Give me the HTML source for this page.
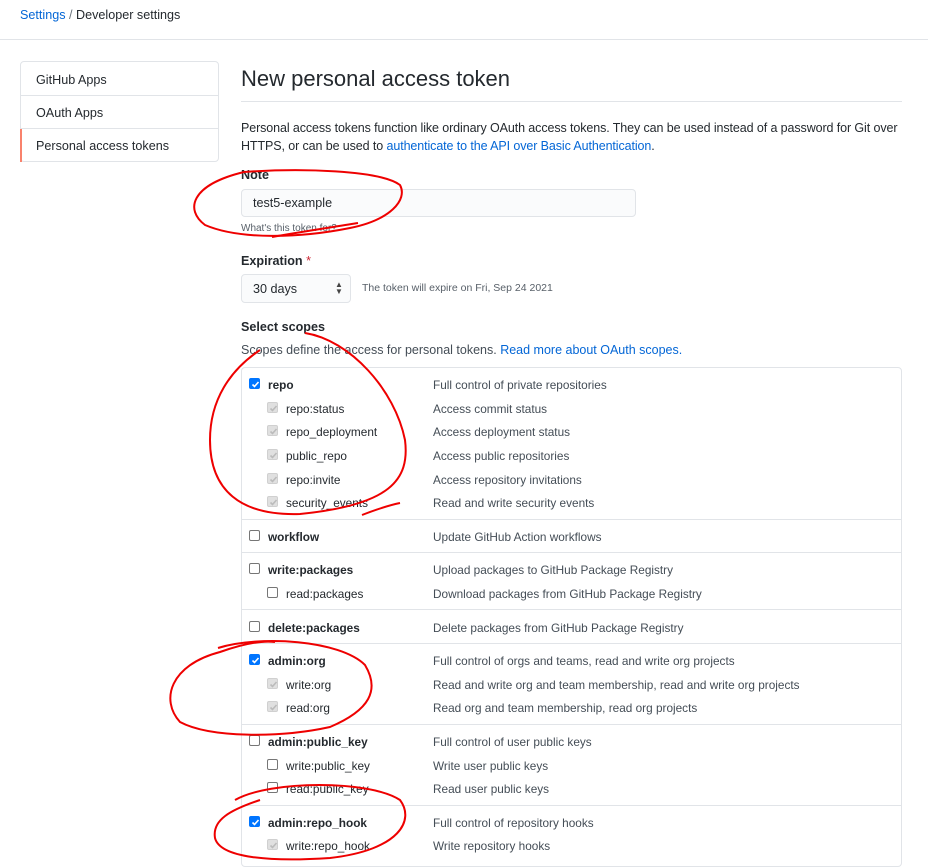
<!DOCTYPE html>
<html><head><meta charset="utf-8"><style>
body{margin:0;width:928px;height:862px;overflow:hidden;background:#fff;font-family:"Liberation Sans",sans-serif;color:#24292e;position:relative}
.a{position:absolute;white-space:nowrap}
.blue{color:#0366d6}
.cb{position:absolute;width:11px;height:11px;border:1px solid #767676;border-radius:2px;background:#fff;box-sizing:border-box}
.cb.on{background:#0075ff;border-color:#0075ff}
.cb.dis{background:#e0e0e0;border-color:#d0d0d0}
.cb svg{position:absolute;left:0;top:0}
.nm{font-size:11.8px;font-weight:bold}
.sn{font-size:11.8px}
.ds{font-size:11.8px;color:#444d56}
.hr{position:absolute;left:241px;width:661px;height:1px;background:#e1e4e8}
</style></head><body>
<div class="a" style="left:20px;top:8px;font-size:12.6px"><span class="blue">Settings</span> <span style="color:#6a737d">/</span> Developer settings</div>
<div class="a" style="left:0;top:39px;width:928px;height:1px;background:#e1e4e8"></div>
<div class="a" style="left:20px;top:61px;width:199px;height:101px;border:1px solid #e1e4e8;border-radius:4px;box-sizing:border-box"></div>
<div class="a" style="left:21px;top:95px;width:197px;height:1px;background:#e1e4e8"></div>
<div class="a" style="left:21px;top:128px;width:197px;height:1px;background:#e1e4e8"></div>
<div class="a" style="left:20px;top:129px;width:2px;height:33px;background:#f9826c"></div>
<div class="a" style="left:36px;top:73px;font-size:12.6px">GitHub Apps</div>
<div class="a" style="left:36px;top:106px;font-size:12.6px">OAuth Apps</div>
<div class="a" style="left:36px;top:139px;font-size:12.6px">Personal access tokens</div>
<div class="a" style="left:241px;top:66px;font-size:22px">New personal access token</div>
<div class="a" style="left:241px;top:101px;width:661px;height:1px;background:#e1e4e8"></div>
<div class="a" style="left:241px;top:119px;font-size:12.5px;line-height:18px;letter-spacing:-0.1px">Personal access tokens function like ordinary OAuth access tokens. They can be used instead of a password for Git over<br>HTTPS, or can be used to <span class="blue">authenticate to the API over Basic Authentication</span>.</div>
<div class="a" style="left:241px;top:168px;font-size:12.6px;font-weight:bold">Note</div>
<div class="a" style="left:241px;top:189px;width:395px;height:28px;border:1px solid #e1e4e8;border-radius:4px;background:#fafbfc;box-sizing:border-box"></div>
<div class="a" style="left:253px;top:196px;font-size:12.6px">test5-example</div>
<div class="a" style="left:241px;top:223px;font-size:10px;color:#586069">What's this token for?</div>
<div class="a" style="left:241px;top:254px;font-size:12.6px;font-weight:bold">Expiration <span style="color:#cb2431;font-weight:normal">*</span></div>
<div class="a" style="left:241px;top:274px;width:110px;height:29px;border:1px solid #e1e4e8;border-radius:4px;background:#fafbfc;box-sizing:border-box"></div>
<div class="a" style="left:253px;top:282px;font-size:12.6px">30 days</div>
<div class="a" style="left:335px;top:281px;font-size:8px;line-height:7px;color:#444">▲<br>▼</div>
<div class="a" style="left:362px;top:282px;font-size:10.5px;color:#586069">The token will expire on Fri, Sep 24 2021</div>
<div class="a" style="left:241px;top:320px;font-size:12.6px;font-weight:bold">Select scopes</div>
<div class="a" style="left:241px;top:343px;font-size:12.5px;color:#444d56">Scopes define the access for personal tokens. <span class="blue">Read more about OAuth scopes.</span></div>
<div class="a" style="left:241px;top:367px;width:661px;height:500px;border:1px solid #e1e4e8;border-radius:4px;box-sizing:border-box"></div>
<div class="hr" style="top:519px"></div><div class="hr" style="top:552px"></div><div class="hr" style="top:609px"></div><div class="hr" style="top:643px"></div><div class="hr" style="top:724px"></div><div class="hr" style="top:805px"></div>
<div id="rows"></div>
<script>
const R=[[384,0,'on','repo','Full control of private repositories'],
[408,1,'dis','repo:status','Access commit status'],
[431,1,'dis','repo_deployment','Access deployment status'],
[455,1,'dis','public_repo','Access public repositories'],
[479,1,'dis','repo:invite','Access repository invitations'],
[502,1,'dis','security_events','Read and write security events'],
[536,0,'','workflow','Update GitHub Action workflows'],
[569,0,'','write:packages','Upload packages to GitHub Package Registry'],
[593,1,'','read:packages','Download packages from GitHub Package Registry'],
[627,0,'','delete:packages','Delete packages from GitHub Package Registry'],
[660,0,'on','admin:org','Full control of orgs and teams, read and write org projects'],
[684,1,'dis','write:org','Read and write org and team membership, read and write org projects'],
[707,1,'dis','read:org','Read org and team membership, read org projects'],
[741,0,'','admin:public_key','Full control of user public keys'],
[765,1,'','write:public_key','Write user public keys'],
[788,1,'','read:public_key','Read user public keys'],
[822,0,'on','admin:repo_hook','Full control of repository hooks'],
[845,1,'dis','write:repo_hook','Write repository hooks']];
let h='';
for(const [y,s,c,n,d] of R){const x=s?267:249;
const chk=c?`<svg width="11" height="11"><path d="M2.5 5.5l2 2 4-4.5" stroke="${c=='on'?'#fff':'#bbb'}" stroke-width="1.6" fill="none"/></svg>`:'';
h+=`<div class="cb ${c}" style="left:${x}px;top:${y-6}px">${chk}</div><div class="a ${s?'sn':'nm'}" style="left:${x+19}px;top:${y-6}px">${n}</div><div class="a ds" style="left:433px;top:${y-6}px">${d}</div>`;}
document.getElementById('rows').innerHTML=h;
</script>
<svg class="a" style="left:0;top:0" width="928" height="862" fill="none" stroke="#e00" stroke-width="2">
<path d="M244 172 C300 168 380 170 400 185 C408 200 390 220 350 228 C300 238 240 240 205 225 C185 210 190 185 244 172"/>
<path d="M272 237 C300 232 340 226 358 223"/>
<path d="M305 333 C350 340 395 390 405 440 C410 480 390 505 300 514 C240 516 210 490 210 440 C210 400 230 370 260 350"/>
<path d="M362 515 C375 510 390 505 400 503"/>
<path d="M218 648 C260 635 340 640 365 665 C380 690 370 710 330 727 C280 738 210 738 180 722 C160 700 170 665 220 652 C240 645 260 640 275 642"/>
<path d="M235 800 C270 780 370 780 400 800 C415 820 400 850 330 858 C270 862 220 858 215 838 C212 820 230 810 260 800"/>
</svg>
</body></html>
